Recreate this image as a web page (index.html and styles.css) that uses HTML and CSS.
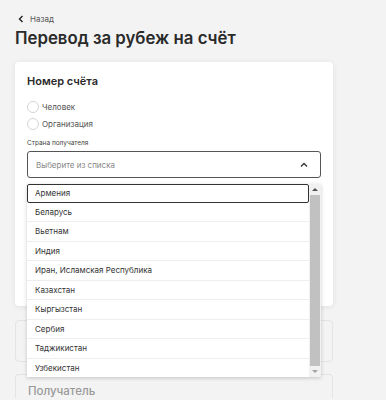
FILE: index.html
```html
<!DOCTYPE html>
<html lang="ru">
<head>
    <meta charset="UTF-8">
    <meta name="viewport" content="width=device-width, initial-scale=1.0">
    <title>Перевод за рубеж на счёт</title>
    <link rel="stylesheet" href="styles.css">
</head>
<body>
    <div class="page">
        <a class="back" href="#">
            <svg width="6" height="8" viewBox="0 0 6 8"><path d="M4.5 1 1.5 4l3 3" fill="none" stroke="#222" stroke-width="1.4"/></svg>
            Назад
        </a>
        <h1 class="title">Перевод за рубеж на счёт</h1>

        <!-- Номер счёта -->
        <div class="card">
            <h2 class="card-title">Номер счёта</h2>
            <label class="radio"><span class="radio-dot"></span>Человек</label>
            <label class="radio"><span class="radio-dot"></span>Организация</label>

            <div class="field-label">Страна получателя</div>
            <div class="select-wrap">
                <div class="select">
                    <span class="placeholder">Выберите из списка</span>
                    <svg width="8" height="6" viewBox="0 0 8 6"><path d="M1 4.5 4 1.5l3 3" fill="none" stroke="#333" stroke-width="1.3"/></svg>
                </div>
                <div class="dropdown">
                    <ul class="options">
                        <li class="option active">Армения</li>
                        <li class="option">Беларусь</li>
                        <li class="option">Вьетнам</li>
                        <li class="option">Индия</li>
                        <li class="option">Иран, Исламская Республика</li>
                        <li class="option">Казахстан</li>
                        <li class="option">Кыргызстан</li>
                        <li class="option">Сербия</li>
                        <li class="option">Таджикистан</li>
                        <li class="option">Узбекистан</li>
                    </ul>
                    <div class="scrollbar">
                        <span class="arrow up"></span>
                        <span class="thumb"></span>
                        <span class="arrow down"></span>
                    </div>
                </div>
            </div>
            <div class="card-space"></div>
        </div>

        <div class="card outline short"></div>
        <div class="card outline last">
            <h2 class="card-title muted">Получатель</h2>
        </div>
    </div>
</body>
</html>
```

FILE: styles.css
```css
body {
    margin: 0;
    background: #f3f3f3;
    font-family: Inter, "Noto Sans", sans-serif;
    color: #222;
    height: 400px;
    overflow: hidden;
}
.page {
    padding: 13px 53px 0 15px;
    display: flex;
    flex-direction: column;
}
.back {
    display: flex;
    align-items: center;
    gap: 6px;
    padding-left: 3px;
    font-size: 8px;
    color: #555;
    text-decoration: none;
    height: 12px;
}
.title {
    margin: 1px 0 0;
    font-size: 16.8px;
    font-weight: 600;
    color: #2a2a2a;
    line-height: 24px;
}
.card {
    margin-top: 12px;
    background: #fff;
    border-radius: 4px;
    box-shadow: 0 1px 6px rgba(0, 0, 0, 0.08);
    padding: 11px 12px 0;
    display: flex;
    flex-direction: column;
}
.card-title {
    margin: 0 0 9px;
    font-size: 11px;
    font-weight: 600;
    line-height: 16px;
    color: #2a2a2a;
}
.card-title.muted {
    margin: 0;
    font-size: 11.5px;
    line-height: 14px;
    color: #999;
    font-weight: 500;
}
.radio {
    display: flex;
    align-items: center;
    gap: 3px;
    font-size: 8px;
    color: #555;
    height: 17px;
}
.radio-dot {
    width: 10px;
    height: 10px;
    border: 1px solid #d5d5d5;
    border-radius: 50%;
}
.field-label {
    margin-top: 6px;
    font-size: 6.5px;
    color: #444;
    line-height: 10px;
}
.select-wrap {
    position: relative;
    margin-top: 3px;
}
.select {
    height: 25px;
    border: 1px solid #555;
    border-radius: 3px;
    display: flex;
    align-items: center;
    justify-content: space-between;
    padding: 0 12px 0 8px;
}
.placeholder {
    font-size: 8px;
    color: #888;
}
.card-space {
    height: 128px;
}
.dropdown {
    position: absolute;
    top: 33px;
    left: 0;
    right: 0;
    background: #fff;
    box-shadow: 0 1px 4px rgba(0, 0, 0, 0.2);
    display: flex;
}
.options {
    list-style: none;
    margin: 0;
    padding: 0;
    flex: 1;
}
.option {
    height: 18.5px;
    line-height: 18.5px;
    border-bottom: 1px solid #eee;
    padding-left: 8px;
    font-size: 8px;
    color: #333;
}
.option:last-child {
    border-bottom: none;
}
.option.active {
    border: 1px solid #333;
    border-radius: 2px;
    padding-left: 7px;
    height: 16.5px;
    line-height: 16.5px;
}
.scrollbar {
    width: 12px;
    background: #f1f1f1;
    display: flex;
    flex-direction: column;
    align-items: center;
}
.arrow {
    width: 0;
    height: 0;
    border-left: 3px solid transparent;
    border-right: 3px solid transparent;
    margin: 4px 0;
}
.arrow.up {
    border-bottom: 3px solid #505050;
}
.arrow.down {
    border-top: 3px solid #a3a3a3;
}
.thumb {
    flex: 1;
    width: 10px;
    background: #c1c1c1;
}
.card.outline {
    background: transparent;
    box-shadow: none;
    border: 1px solid #e4e4e4;
    border-radius: 4px;
}
.card.short {
    margin-top: 14px;
    height: 40px;
    padding: 0;
}
.card.last {
    margin-top: 12px;
    padding: 9px 12px 0;
    border-bottom: none;
    border-radius: 4px 4px 0 0;
}
```
